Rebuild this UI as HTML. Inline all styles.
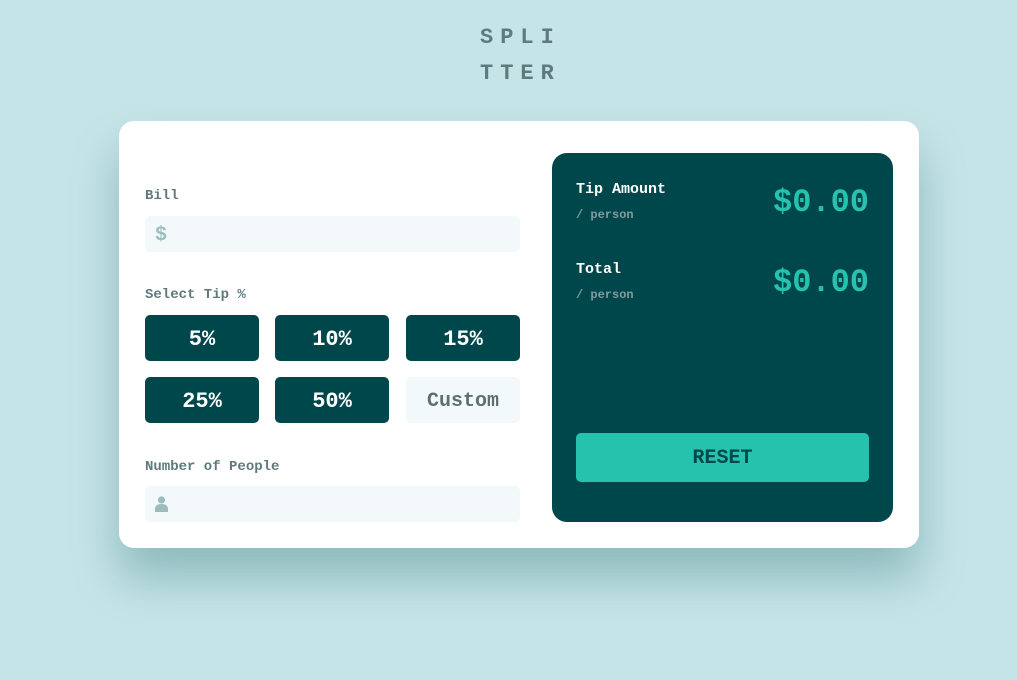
<!DOCTYPE html>
<html><head><style>
*{box-sizing:border-box;margin:0;padding:0}
body{width:1017px;height:680px;background:#c5e4e7;font-family:"Liberation Mono",monospace;font-weight:bold;position:relative;overflow:hidden}
.logo{position:absolute;left:480px;top:20px;color:#5e7a7d;font-size:22px;letter-spacing:7px;line-height:36px;width:90px}
.card{position:absolute;left:119px;top:121px;width:800px;height:427px;background:#fff;border-radius:15px;box-shadow:0 30px 45px rgba(60,125,130,.4)}
.lbl{position:absolute;left:26px;color:#5e7a7d;font-size:14px}
.inp{position:absolute;left:26px;width:375px;height:36px;background:#f3f9fa;border-radius:5px;color:#9ebbbd;font-size:20px}
.btn{position:absolute;width:114px;height:46px;background:#00474b;color:#fff;border-radius:5px;font-size:22px;text-align:center;line-height:50px}
.res{position:absolute;left:433px;top:32px;width:341px;height:369px;background:#00474b;border-radius:15px}
.t{position:absolute;left:24px;color:#fff;font-size:15px}
.p{position:absolute;left:24px;color:#7f9d9f;font-size:12px}
.v{position:absolute;right:24px;color:#26c2ad;font-size:32px}
.reset{position:absolute;left:24px;top:280px;width:293px;height:49px;background:#26c2ad;border-radius:5px;color:#00474b;font-size:20px;text-align:center;line-height:52px}
</style></head><body>
<div class="logo">SPLI TTER</div>
<div class="card">
<div class="lbl" style="top:67px">Bill</div>
<div class="inp" style="top:95px;padding:8px 10px">$</div>
<div class="lbl" style="top:166px">Select Tip %</div>
<div class="btn" style="left:26px;top:194px">5%</div>
<div class="btn" style="left:156px;top:194px">10%</div>
<div class="btn" style="left:287px;top:194px">15%</div>
<div class="btn" style="left:26px;top:256px">25%</div>
<div class="btn" style="left:156px;top:256px">50%</div>
<div class="btn" style="left:287px;top:256px;background:#f3f9fa;color:#5e6f70;font-size:20px">Custom</div>
<div class="lbl" style="top:338px">Number of People</div>
<div class="inp" style="top:365px"><svg style="position:absolute;left:10px;top:10px" width="13" height="16" viewBox="0 0 13 16"><circle cx="6.5" cy="4" r="3.6" fill="#9ebbbd"/><path d="M0 16v-3c0-3 2-5 6.5-5S13 10 13 13v3z" fill="#9ebbbd"/></svg></div>
<div class="res">
<div class="t" style="top:28px">Tip Amount</div>
<div class="p" style="top:55px">/ person</div>
<div class="v" style="top:31px">$0.00</div>
<div class="t" style="top:108px">Total</div>
<div class="p" style="top:135px">/ person</div>
<div class="v" style="top:111px">$0.00</div>
<div class="reset">RESET</div>
</div>
</div>
</body></html>
